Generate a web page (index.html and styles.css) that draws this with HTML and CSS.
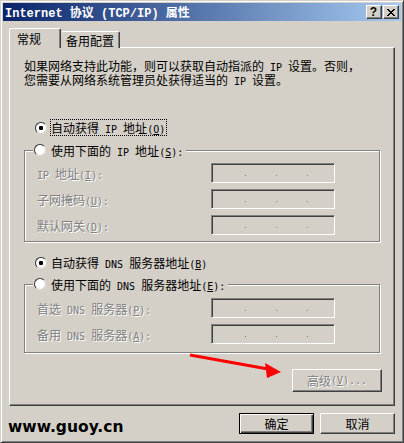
FILE: index.html
```html
<!DOCTYPE html>
<html lang="zh-CN">
<head>
<meta charset="utf-8">
<title>Internet 协议 (TCP/IP) 属性</title>
<link rel="stylesheet" href="styles.css">
</head>
<body>
<div class="window">
  <div class="titlebar">
    <span class="title">Internet 协议 (TCP/IP) 属性</span>
    <div class="caps">
      <span class="cap cap-help">?</span>
      <span class="cap cap-close"><svg width="8" height="7" viewBox="0 0 8 7"><path d="M0 0h2v1h1v1h2v-1h1v-1h2v1h-1v1h-1v1h-1v1h1v1h1v1h1v1h-2v-1h-1v-1h-2v1h-1v1h-2v-1h1v-1h1v-1h1v-1h-1v-1h-1v-1h-1z" fill="#000"/></svg></span>
    </div>
  </div>
  <div class="body">
    <div class="tabs">
      <div class="tab active">常规</div>
      <div class="tab">备用配置</div>
    </div>
    <div class="panel">
      <p class="intro">如果网络支持此功能，则可以获取自动指派的<span class="en"> IP </span>设置。否则，<br>您需要从网络系统管理员处获得适当的<span class="en"> IP </span>设置。</p>
      <div class="radio-row first">
        <span class="radio on"></span><span class="rlabel focus">自动获得<span class="en"> IP </span>地址<span class="en">(<u>O</u>)</span></span>
      </div>
      <div class="group g-ip">
        <div class="legend"><span class="radio"></span><span>使用下面的<span class="en"> IP </span>地址<span class="en">(<u>S</u>):</span></span></div>
        <div class="field"><span class="lbl"><span class="en">IP </span>地址<span class="en">(<u>I</u>):</span></span><span class="ipbox"><i></i><i></i><i></i></span></div>
        <div class="field"><span class="lbl">子网掩码<span class="en">(<u>U</u>):</span></span><span class="ipbox"><i></i><i></i><i></i></span></div>
        <div class="field"><span class="lbl">默认网关<span class="en">(<u>D</u>):</span></span><span class="ipbox"><i></i><i></i><i></i></span></div>
      </div>
      <div class="radio-row second">
        <span class="radio on"></span><span class="rlabel">自动获得<span class="en"> DNS </span>服务器地址<span class="en">(<u>B</u>)</span></span>
      </div>
      <div class="group g-dns">
        <div class="legend"><span class="radio"></span><span>使用下面的<span class="en"> DNS </span>服务器地址<span class="en">(<u>E</u>):</span></span></div>
        <div class="field"><span class="lbl">首选<span class="en"> DNS </span>服务器<span class="en">(<u>P</u>):</span></span><span class="ipbox"><i></i><i></i><i></i></span></div>
        <div class="field"><span class="lbl">备用<span class="en"> DNS </span>服务器<span class="en">(<u>A</u>):</span></span><span class="ipbox"><i></i><i></i><i></i></span></div>
      </div>
      <div class="adv-row"><span class="btn adv">高级<span class="en">(<u>V</u>)...</span></span></div>
    </div>
    <div class="footer">
      <span class="brand">www.guoy.cn</span>
      <span class="btn default">确定</span>
      <span class="btn">取消</span>
    </div>
  </div>
  <svg class="arrow" width="100" height="32" viewBox="0 0 100 32">
    <line x1="4" y1="5" x2="82" y2="19" stroke="#f00" stroke-width="3"/>
    <polygon points="79,13 95,22 81,28" fill="#f00"/>
  </svg>
</div>
</body>
</html>
```
FILE: styles.css
```css
* { box-sizing: border-box; margin: 0; padding: 0; }
html, body { width: 404px; height: 443px; background: #D4D0C8; overflow: hidden; }
body {
  font-family: "Noto Sans CJK SC", sans-serif;
  font-size: 12px;
  color: #000;
}
u { text-decoration: underline; }
.en {
  font-family: "DejaVu Sans Mono", monospace;
  font-size: 10px;
  line-height: 10px;
  white-space: pre;
}

.window {
  position: relative;
  width: 404px;
  height: 443px;
  border: 1px solid;
  border-color: #D4D0C8 #404040 #404040 #D4D0C8;
  box-shadow: inset 1px 1px 0 #fff, inset -1px -1px 0 #808080;
  padding: 2px;
  display: flex;
  flex-direction: column;
}

.titlebar {
  height: 18px;
  background: linear-gradient(to right, #0A246A, #A6CAF0);
  display: flex;
  align-items: center;
  padding: 0 2px;
}
.title {
  color: #fff;
  font-family: "Liberation Mono", "Noto Sans CJK SC", monospace;
  font-weight: bold;
  font-size: 12px;
  white-space: nowrap;
  flex: 1;
}
.caps { display: flex; gap: 1px; }
.cap {
  width: 16px;
  height: 14px;
  background: #D4D0C8;
  border: 1px solid;
  border-color: #fff #404040 #404040 #fff;
  box-shadow: inset -1px -1px 0 #808080;
  display: flex;
  align-items: center;
  justify-content: center;
}
.cap-help {
  font-family: "Liberation Sans", sans-serif;
  font-weight: bold;
  font-size: 12px;
  line-height: 12px;
  padding-right: 1px;
}
.cap-close svg { display: block; margin-right: 1px; }

.body {
  flex: 1;
  display: flex;
  flex-direction: column;
  padding: 7px 6px 0 6px;
}

.tabs {
  position: relative;
  z-index: 1;
  display: flex;
  align-items: flex-end;
  height: 20px;
  margin-bottom: -1px;
}
.tab {
  height: 17px;
  display: flex;
  align-items: center;
  padding: 1px 5px 0 5px;
  border-top: 1px solid #fff;
  border-right: 1px solid #404040;
  box-shadow: inset -1px 0 0 #808080;
  border-radius: 2px 2px 0 0;
  background: #D4D0C8;
}
.tab.active {
  height: 20px;
  border-left: 1px solid #fff;
  padding: 0 19px 1px 7px;
}

.panel {
  height: 359px;
  border: 1px solid;
  border-color: #fff #404040 #404040 #fff;
  box-shadow: inset -1px -1px 0 #808080;
  padding: 11px 13px 0 14px;
  display: flex;
  flex-direction: column;
}
.intro {
  line-height: 13px;
  height: 26px;
  white-space: nowrap;
}

.radio-row {
  display: flex;
  align-items: center;
  height: 17px;
  padding-left: 11px;
  gap: 3px;
}
.radio-row.first { margin-top: 34px; }
.radio-row.second { margin-top: 12px; }
.rlabel { padding: 0 1px 0 0; border: 1px solid transparent; line-height: 15px; }
.rlabel.focus { border: 1px dotted #000; }

.radio {
  flex: none;
  width: 12px;
  height: 12px;
  border-radius: 50%;
  border: 1px solid;
  border-color: #808080 #fff #fff #808080;
  display: flex;
  align-items: center;
  justify-content: center;
}
.radio::before {
  content: "";
  width: 10px;
  height: 10px;
  flex: none;
  border-radius: 50%;
  border: 1px solid;
  border-color: #404040 #D4D0C8 #D4D0C8 #404040;
  background: #fff;
}
.radio.on::before {
  background: radial-gradient(circle, #000 0 2px, #fff 2.4px);
}

.group {
  width: 356px;
  border: 1px solid #808080;
  box-shadow: 1px 1px 0 #fff, inset 1px 1px 0 #fff;
  padding: 0 0 6px 12px;
}
.g-ip { margin-top: 14px; }
.g-dns { margin-top: 13px; padding-bottom: 8px; }
.legend {
  display: flex;
  align-items: center;
  gap: 5px;
  width: max-content;
  height: 14px;
  margin: -8px 0 0 -4px;
  padding: 0 3px 0 1px;
  background: #D4D0C8;
}
.field {
  display: flex;
  align-items: center;
  height: 20px;
  margin-top: 6px;
}
.g-dns .field:nth-child(2) { margin-top: 7px; }
.lbl {
  width: 174px;
  color: #808080;
  text-shadow: 1px 1px 0 #fff;
}
.ipbox {
  width: 124px;
  height: 20px;
  border: 1px solid;
  border-color: #808080 #fff #fff #808080;
  box-shadow: inset 1px 1px 0 #404040, inset -1px -1px 0 #D4D0C8;
  display: flex;
  align-items: flex-start;
  padding: 11px 0 0 33px;
  gap: 30px;
}
.ipbox i {
  display: block;
  width: 1px;
  height: 1px;
  background: #808080;
}

.adv-row {
  display: flex;
  justify-content: flex-end;
  margin-top: 16px;
  margin-right: -1px;
}
.btn {
  width: 75px;
  height: 21px;
  display: flex;
  align-items: center;
  justify-content: center;
  background: #D4D0C8;
  border: 1px solid;
  border-color: #fff #404040 #404040 #fff;
  box-shadow: inset -1px -1px 0 #808080;
}
.btn.adv {
  width: 90px;
  height: 23px;
  color: #808080;
  text-shadow: 1px 1px 0 #fff;
}
.btn.default {
  border-color: #000;
  box-shadow: inset 1px 1px 0 #fff, inset -1px -1px 0 #404040, inset -2px -2px 0 #808080;
}

.footer {
  display: flex;
  align-items: center;
  gap: 6px;
  margin-top: 7px;
}
.brand {
  align-self: flex-end;
  margin-right: auto;
  margin-left: -1px;
  margin-bottom: -2px;
  line-height: 18px;
  font-family: "DejaVu Sans", sans-serif;
  font-weight: bold;
  font-size: 15.5px;
  color: #000;
}

.arrow {
  position: absolute;
  left: 185px;
  top: 349px;
  pointer-events: none;
}
```
